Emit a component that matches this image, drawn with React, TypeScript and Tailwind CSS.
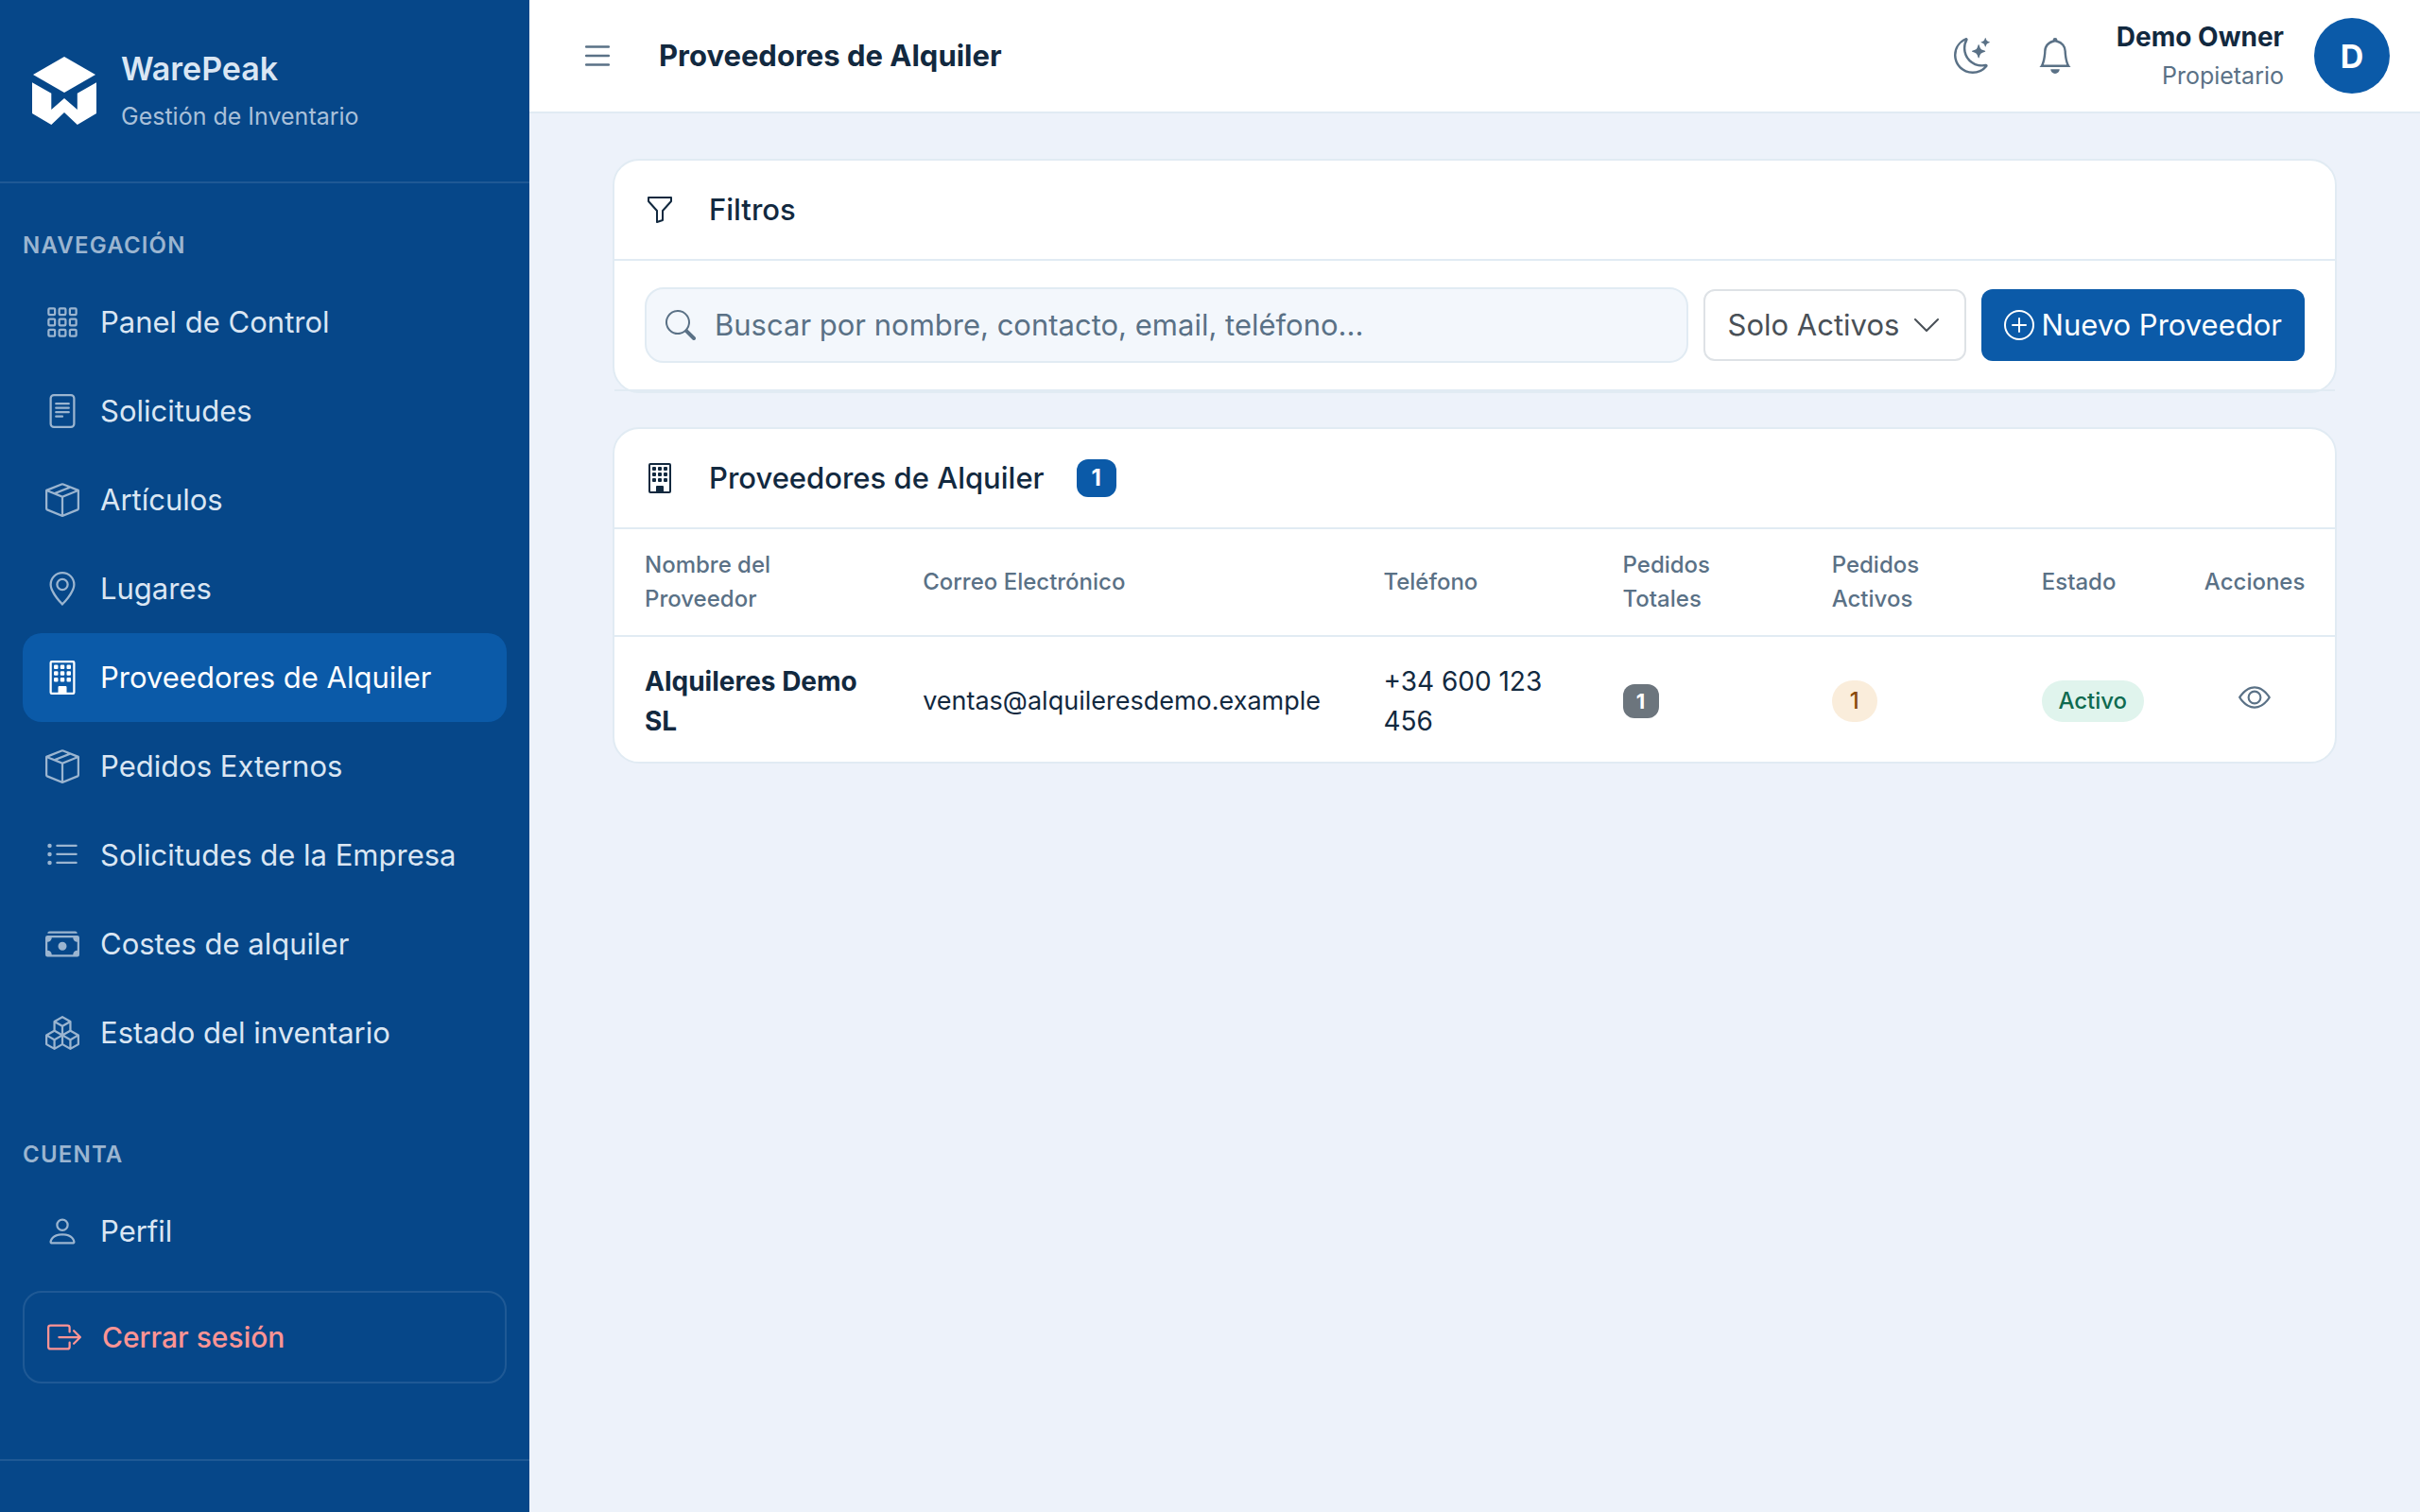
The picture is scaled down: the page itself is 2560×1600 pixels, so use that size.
import { useState } from "react";
import type { ReactNode } from "react";
import type { IconType } from "react-icons";
import {
  BsBell,
  BsBoxes,
  BsBoxArrowRight,
  BsBoxSeam,
  BsBuilding,
  BsCashStack,
  BsChevronDown,
  BsEye,
  BsFileText,
  BsFunnel,
  BsGeoAlt,
  BsGrid3X3Gap,
  BsList,
  BsListUl,
  BsMoonStars,
  BsPerson,
  BsPlusCircle,
  BsSearch,
} from "react-icons/bs";
import clsx from "clsx";

interface INavItem {
  label: string;
  icon: IconType;
  active?: boolean;
}

interface IProvider {
  name: string;
  email: string;
  phone: string;
  totalOrders: number;
  activeOrders: number;
  active: boolean;
}

const MAIN_NAV: INavItem[] = [
  { label: "Panel de Control", icon: BsGrid3X3Gap },
  { label: "Solicitudes", icon: BsFileText },
  { label: "Artículos", icon: BsBoxSeam },
  { label: "Lugares", icon: BsGeoAlt },
  { label: "Proveedores de Alquiler", icon: BsBuilding, active: true },
  { label: "Pedidos Externos", icon: BsBoxSeam },
  { label: "Solicitudes de la Empresa", icon: BsListUl },
  { label: "Costes de alquiler", icon: BsCashStack },
  { label: "Estado del inventario", icon: BsBoxes },
];

const ACCOUNT_NAV: INavItem[] = [{ label: "Perfil", icon: BsPerson }];

// table-fixed scales these to the width of the card
const COLUMNS = [
  { label: "Nombre del Proveedor", className: "w-[298px] pl-8 pr-14" },
  { label: "Correo Electrónico", className: "w-[487px] px-7" },
  { label: "Teléfono", className: "w-[253px] px-7" },
  { label: "Pedidos Totales", className: "w-[221px] px-7" },
  { label: "Pedidos Activos", className: "w-[222px] px-7" },
  { label: "Estado", className: "w-[172px] px-7" },
  { label: "Acciones", className: "w-[166px] pl-7 pr-8 text-center" },
];

const PROVIDERS: IProvider[] = [
  {
    name: "Alquileres Demo SL",
    email: "ventas@alquileresdemo.example",
    phone: "+34 600 123 456",
    totalOrders: 1,
    activeOrders: 1,
    active: true,
  },
];

function Logo() {
  return (
    <svg viewBox="0 0 68 72" className="mt-3 h-[72px] w-[68px] shrink-0 fill-white" aria-hidden="true">
      <path d="M34 0 67 19 34 38 1 19Z" />
      <path d="M0 27.3 20.3 38.7V56L34 44 47.8 56V38.7L68 27.3V60L47.8 72 34 59 20.3 72 0 60Z" />
    </svg>
  );
}

function NavLink({ item }: { item: INavItem }) {
  const Icon = item.icon;

  return (
    <li>
      <a
        href="#"
        aria-current={item.active ? "page" : undefined}
        className={clsx(
          "flex h-[94px] items-center gap-[22px] rounded-[20px] px-6 text-[31px] whitespace-nowrap",
          item.active ? "bg-[#0b5aa8] text-white" : "text-[#dae6f3]"
        )}
      >
        <Icon className={clsx("size-9 shrink-0", !item.active && "text-[#9bb5d0]")} />
        {item.label}
      </a>
    </li>
  );
}

function NavHeading({ children }: { children: ReactNode }) {
  return (
    <h2 className="mb-4 text-2xl/9 font-semibold tracking-wider text-[#9bb5d0] uppercase">{children}</h2>
  );
}

function Sidebar() {
  return (
    <aside className="flex w-[560px] shrink-0 flex-col bg-[#064789]">
      <div className="flex h-[194px] gap-[26px] border-b-2 border-white/10 px-[34px] pt-12">
        <Logo />
        <div>
          <p className="text-[34px]/[50px] font-semibold text-[#dae6f3]">WarePeak</p>
          <p className="text-[25px]/[50px] text-[#a9c0d9]">Gestión de Inventario</p>
        </div>
      </div>

      <nav className="px-6 pt-12">
        <NavHeading>Navegación</NavHeading>
        <ul>
          {MAIN_NAV.map((item) => (
            <NavLink key={item.label} item={item} />
          ))}
        </ul>

        <div className="mt-16">
          <NavHeading>Cuenta</NavHeading>
          <ul>
            {ACCOUNT_NAV.map((item) => (
              <NavLink key={item.label} item={item} />
            ))}
          </ul>
        </div>

        <button
          type="button"
          className="mt-4 flex h-[98px] w-full items-center gap-[22px] rounded-[20px] border-2 border-white/10 px-6 text-3xl font-medium text-[#ff9494]"
        >
          <BsBoxArrowRight className="size-9" />
          Cerrar sesión
        </button>
      </nav>

      <div className="mt-auto h-14 border-t-2 border-white/10" />
    </aside>
  );
}

function Topbar() {
  return (
    <header className="flex h-[120px] items-center border-b-2 border-[#e1ebf3] bg-white pr-8 pl-[53px]">
      <button type="button" aria-label="Contraer menú" className="text-[#5a7186]">
        <BsList className="size-[38px]" />
      </button>
      <h1 className="ml-[46px] text-[31px] font-bold">Proveedores de Alquiler</h1>

      <div className="ml-auto flex items-center">
        <button type="button" aria-label="Modo oscuro" className="mr-[50px] text-[#5a7186]">
          <BsMoonStars className="size-[38px]" />
        </button>
        <button type="button" aria-label="Notificaciones" className="mr-[46px] text-[#5a7186]">
          <BsBell className="size-[38px]" />
        </button>
        <div className="mr-8 text-right">
          <p className="text-[28px]/[42px] font-bold">Demo Owner</p>
          <p className="text-[25px]/[40px] text-[#5a7186]">Propietario</p>
        </div>
        <div className="flex size-20 items-center justify-center rounded-full bg-[#0b5aa8] text-[34px] font-bold text-white">
          D
        </div>
      </div>
    </header>
  );
}

function Card({ icon: Icon, title, badge, children }: {
  icon: IconType;
  title: string;
  badge?: number;
  children: ReactNode;
}) {
  return (
    <section className="rounded-[28px] border-2 border-[#e1ebf3] bg-white">
      <div className="flex h-[106px] items-center border-b-2 border-[#e1ebf3] px-8">
        <Icon className="size-8" />
        <h2 className="ml-9 text-[31px] font-medium">{title}</h2>
        {badge !== undefined && (
          <span className="ml-[34px] flex h-10 w-[42px] items-center justify-center rounded-xl bg-[#0b5aa8] text-2xl font-bold text-white">
            {badge}
          </span>
        )}
      </div>
      {children}
    </section>
  );
}

function Filters() {
  const [search, setSearch] = useState("");

  return (
    <Card icon={BsFunnel} title="Filtros">
      <div className="flex items-center gap-4 border-b-2 border-[#e1ebf3] px-8 py-7 text-[31px]">
        <label className="flex h-20 min-w-0 flex-1 items-center gap-5 rounded-[20px] border-2 border-[#e1ebf3] bg-[#f3f7fc] px-5">
          <BsSearch className="size-8 shrink-0 text-[#5a7186]" />
          <input
            type="text"
            aria-label="Buscar proveedores"
            value={search}
            onChange={(e) => setSearch(e.target.value)}
            placeholder="Buscar por nombre, contacto, email, teléfono..."
            className="min-w-0 flex-1 bg-transparent outline-none placeholder:text-[#5a7186]"
          />
        </label>
        <div className="relative text-[#495057]">
          <select
            aria-label="Estado del proveedor"
            className="h-[76px] w-[278px] appearance-none rounded-xl border-2 border-[#dee2e6] bg-white pr-14 pl-6"
          >
            <option>Solo Activos</option>
            <option>Todos</option>
          </select>
          <BsChevronDown className="pointer-events-none absolute top-[22px] right-[26px] size-8" />
        </div>
        <button
          type="button"
          className="flex h-[76px] items-center gap-2 rounded-xl bg-[#0b5aa8] px-6 whitespace-nowrap text-white"
        >
          <BsPlusCircle className="size-8" />
          Nuevo Proveedor
        </button>
      </div>
    </Card>
  );
}

function ProviderRow({ provider }: { provider: IProvider }) {
  return (
    <tr className="h-[132px]">
      <td className="pt-1 pr-7 pl-8 font-bold">{provider.name}</td>
      <td className="px-7 pt-1 text-[27px] whitespace-nowrap">{provider.email}</td>
      <td className="px-7 pt-1">{provider.phone}</td>
      <td className="px-7 pt-1">
        <span className="flex h-9 w-[38px] items-center justify-center rounded-xl bg-[#6c757d] text-[22px] font-bold text-white">
          {provider.totalOrders}
        </span>
      </td>
      <td className="px-7 pt-1">
        <span className="flex h-11 w-12 items-center justify-center rounded-full bg-[#faeddb] text-2xl font-medium text-[#8a4b08]">
          {provider.activeOrders}
        </span>
      </td>
      <td className="px-7 pt-1">
        <span className="flex h-11 w-[108px] items-center justify-center rounded-full bg-[#e0f4ed] text-2xl font-medium text-[#0f6b50]">
          {provider.active ? "Activo" : "Inactivo"}
        </span>
      </td>
      <td className="pr-8 pb-2 pl-7 text-center">
        <button type="button" aria-label="Ver proveedor" className="align-middle text-[#5a7186]">
          <BsEye className="size-[34px]" />
        </button>
      </td>
    </tr>
  );
}

function ProvidersTable() {
  return (
    <Card icon={BsBuilding} title="Proveedores de Alquiler" badge={PROVIDERS.length}>
      <table className="w-full table-fixed border-separate border-spacing-0 text-left text-[28px]/[42px]">
        <thead>
          <tr className="h-[114px] text-2xl/9 text-[#5a7186]">
            {COLUMNS.map((column) => (
              <th
                key={column.label}
                scope="col"
                className={clsx("border-b-2 border-[#e1ebf3] font-medium", column.className)}
              >
                {column.label}
              </th>
            ))}
          </tr>
        </thead>
        <tbody>
          {PROVIDERS.map((provider) => (
            <ProviderRow key={provider.email} provider={provider} />
          ))}
        </tbody>
      </table>
    </Card>
  );
}

export default function App() {
  return (
    <div className="flex min-h-screen bg-[#edf2fa] font-['Inter','Liberation_Sans',sans-serif] text-[#12293f]">
      <Sidebar />
      <div className="min-w-0 flex-1">
        <Topbar />
        <main className="flex flex-col gap-9 px-[88px] py-12">
          <Filters />
          <ProvidersTable />
        </main>
      </div>
    </div>
  );
}
